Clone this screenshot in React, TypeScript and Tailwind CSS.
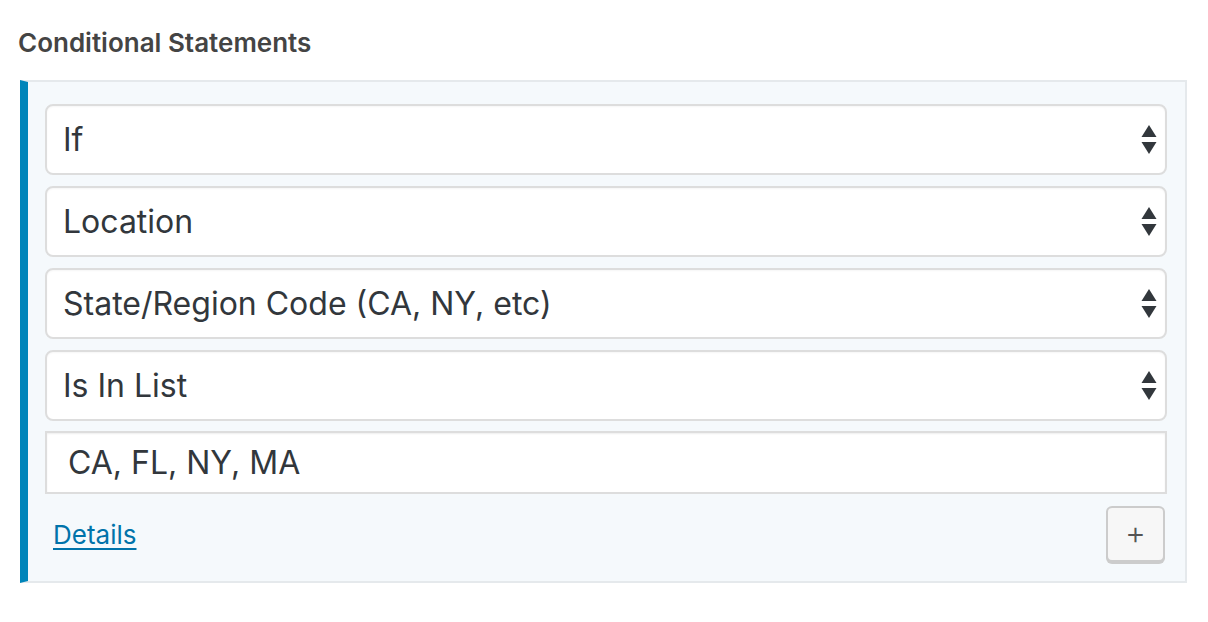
const font = { fontFamily: "Inter, 'Liberation Sans', sans-serif" };

const Arrows = () => (
  <svg width="16" height="30" viewBox="0 0 16 30" className="shrink-0">
    <polygon points="8,0 15.5,12 0.5,12" fill="#32373c" />
    <polygon points="0.5,17 15.5,17 8,29" fill="#32373c" />
  </svg>
);

const SelectBox = ({ label }: { label: string }) => (
  <div className="flex h-[71px] items-center justify-between rounded-[8px] border-2 border-[#dddddd] bg-white pl-[16px] pr-[8px] shadow-[inset_0_1px_2px_rgba(0,0,0,0.04)]">
    <span className="text-[32px] text-[#32373c]">{label}</span>
    <Arrows />
  </div>
);

export default function App() {
  return (
    <div className="min-h-screen bg-white pl-[20px] pt-[28px]" style={font}>
      <h2 className="-ml-[2px] text-[26px] font-semibold leading-[30px] text-[#444444]">Conditional Statements</h2>
      <div className="mt-[22px] w-[1167px] border-2 border-l-[8px] border-[#e5e9ec] border-l-[#0085ba] bg-[#f5f9fc] pb-[19px] pl-[17px] pr-[18px] pt-[22px]">
        <div className="flex flex-col gap-[11px]">
          <SelectBox label="If" />
          <SelectBox label="Location" />
          <SelectBox label="State/Region Code (CA, NY, etc)" />
          <SelectBox label="Is In List" />
        </div>
        <div className="mt-[10px] flex h-[63px] items-center border-2 border-[#dddddd] bg-white pl-[21px] shadow-[inset_0_1px_2px_rgba(0,0,0,0.07)]">
          <span className="text-[32px] text-[#32373c]">CA, FL, NY, MA</span>
        </div>
        <div className="mt-[12px] flex items-center justify-between">
          <a href="#" className="ml-[8px] text-[26px] text-[#0073aa] underline decoration-2 underline-offset-[4px]">
            Details
          </a>
          <button className="mr-[2px] flex h-[56px] w-[59px] items-center justify-center rounded-[6px] border-2 border-[#cccccc] bg-[#f7f7f7] pb-[2px] text-[32px] font-light leading-none text-[#555555] shadow-[0_2px_0_#cccccc]">
            +
          </button>
        </div>
      </div>
    </div>
  );
}
